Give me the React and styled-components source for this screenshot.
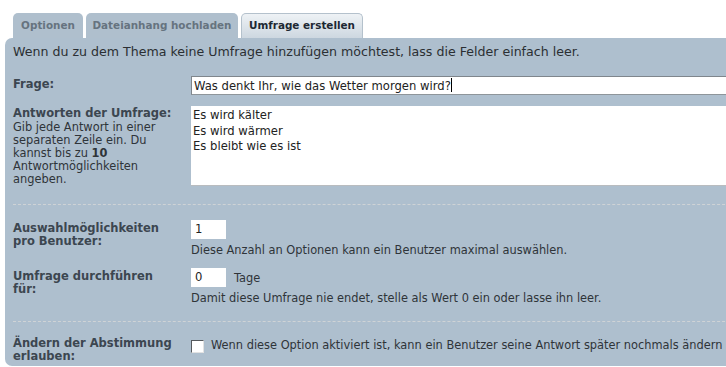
import styled, { createGlobalStyle } from 'styled-components';

const GlobalStyle = createGlobalStyle`
  html, body {
    margin: 0;
    padding: 0;
    background: #ffffff;
    overflow: hidden;
    font-family: "DejaVu Sans", Verdana, sans-serif;
  }
`;

const Page = styled.div`
  width: 780px;
  padding: 13px 0 0 5px;
`;

const Tabs = styled.ul`
  display: flex;
  gap: 3px;
  margin: 0;
  padding: 0 0 0 8px;
  list-style: none;
  height: 25px;
`;

const Tab = styled.li`
  box-sizing: border-box;
  width: ${p => p.$w}px;
  height: 25px;
  text-align: center;
  line-height: ${p => (p.$active ? '23px' : '25px')};
  font-size: 10.4px;
  font-weight: bold;
  border-radius: 5px 5px 0 0;
  color: ${p => (p.$active ? '#1d2833' : '#66737f')};
  background: ${p => (p.$active ? 'linear-gradient(#eef2f5, #cdd7e0)' : '#afbfcd')};
  border: ${p => (p.$active ? '1px solid #b4c1cc' : 'none')};
  border-bottom: none;
`;

const Panel = styled.div`
  background: #aebfce;
  border-radius: 7px 0 0 7px;
  padding: 6px 0 3px 8px;
  color: #2b2f33;
`;

const Intro = styled.p`
  margin: 0 0 16px;
  font-size: 12.6px;
  line-height: 16px;
`;

const Row = styled.div`
  display: grid;
  grid-template-columns: 178px 1fr;
  align-items: start;
  margin-bottom: ${p => p.$gap || 0}px;
`;

const Label = styled.div`
  width: 162px;
  font-size: 11.4px;
  line-height: 13px;
  color: #3c4650;
  padding-top: ${p => p.$top || 0}px;
`;

const Strong = styled.strong`
  display: block;
  color: #3c4650;
  font-size: 11.5px;
  line-height: 13px;
  margin-bottom: ${p => p.$after || 0}px;
`;

const Explain = styled.span`
  color: #2f3439;
  b {
    font-weight: bold;
  }
`;

const Field = styled.div`
  display: flex;
  flex-direction: column;
  gap: 4px;
`;

const TextInput = styled.div`
  box-sizing: border-box;
  height: 19px;
  background: #fff;
  border-top: 1px solid #7f868c;
  border-left: 1px solid #7f868c;
  border-bottom: 1px solid #8e959a;
  padding: 1px 0 0 2px;
  font-size: 11.6px;
  line-height: 15px;
  color: #222;
`;

const Caret = styled.span`
  display: inline-block;
  width: 1px;
  height: 14px;
  background: #000;
  vertical-align: -2px;
`;

const TextArea = styled.div`
  box-sizing: border-box;
  height: 80px;
  background: #fff;
  border-bottom: 1px solid #b9bcbf;
  padding: 2px 0 0 2px;
  font-size: 11.6px;
  line-height: 15.5px;
  color: #222;
`;

const Separator = styled.hr`
  border: none;
  border-top: 1px dashed #cfd3d6;
  margin: 0 0 ${p => p.$after || 15}px;
  height: 0;
`;

const Inline = styled.div`
  display: flex;
  align-items: center;
  gap: 8px;
  font-size: 11.4px;
  color: #2f3439;
`;

const SmallInput = styled.div`
  box-sizing: border-box;
  width: 35px;
  height: 19px;
  background: #fff;
  padding: 2px 0 0 4px;
  font-size: 11.6px;
  line-height: 15px;
  color: #222;
`;

const Hint = styled.div`
  font-size: 11.4px;
  line-height: 14px;
  color: #2f3439;
`;

const Check = styled.span`
  box-sizing: border-box;
  flex: none;
  width: 13px;
  height: 13px;
  margin-top: 3px;
  background: #fff;
  border-top: 1px solid #55595d;
  border-left: 1px solid #55595d;
  border-right: 1px solid #e3e3e3;
  border-bottom: 1px solid #e3e3e3;
  margin-right: -1px;
`;

export default function App() {
  return (
    <Page>
      <GlobalStyle />
      <Tabs>
        <Tab $w={70}>Optionen</Tab>
        <Tab $w={152}>Dateianhang hochladen</Tab>
        <Tab $w={122} $active>Umfrage erstellen</Tab>
      </Tabs>
      <Panel>
        <Intro>Wenn du zu dem Thema keine Umfrage hinzufügen möchtest, lass die Felder einfach leer.</Intro>

        <Row $gap={11}>
          <Label $top={2}><Strong>Frage:</Strong></Label>
          <TextInput>Was denkt Ihr, wie das Wetter morgen wird?<Caret /></TextInput>
        </Row>

        <Row $gap={18}>
          <Label $top={1}>
            <Strong $after={1}>Antworten der Umfrage:</Strong>
            <Explain>Gib jede Antwort in einer separaten Zeile ein. Du kannst bis zu <b>10</b> Antwortmöglichkeiten angeben.</Explain>
          </Label>
          <TextArea>
            Es wird kälter<br />
            Es wird wärmer<br />
            Es bleibt wie es ist
          </TextArea>
        </Row>

        <Separator />

        <Row $gap={11}>
          <Label $top={2}><Strong>Auswahlmöglichkeiten pro Benutzer:</Strong></Label>
          <Field>
            <SmallInput>1</SmallInput>
            <Hint>Diese Anzahl an Optionen kann ein Benutzer maximal auswählen.</Hint>
          </Field>
        </Row>

        <Row $gap={16}>
          <Label $top={2}><Strong>Umfrage durchführen für:</Strong></Label>
          <Field>
            <Inline>
              <SmallInput>0</SmallInput>
              <span>Tage</span>
            </Inline>
            <Hint>Damit diese Umfrage nie endet, stelle als Wert 0 ein oder lasse ihn leer.</Hint>
          </Field>
        </Row>

        <Separator $after={15} />

        <Row>
          <Label><Strong>Ändern der Abstimmung erlauben:</Strong></Label>
          <Inline>
            <Check />
            <span>Wenn diese Option aktiviert ist, kann ein Benutzer seine Antwort später nochmals ändern</span>
          </Inline>
        </Row>
      </Panel>
    </Page>
  );
}
